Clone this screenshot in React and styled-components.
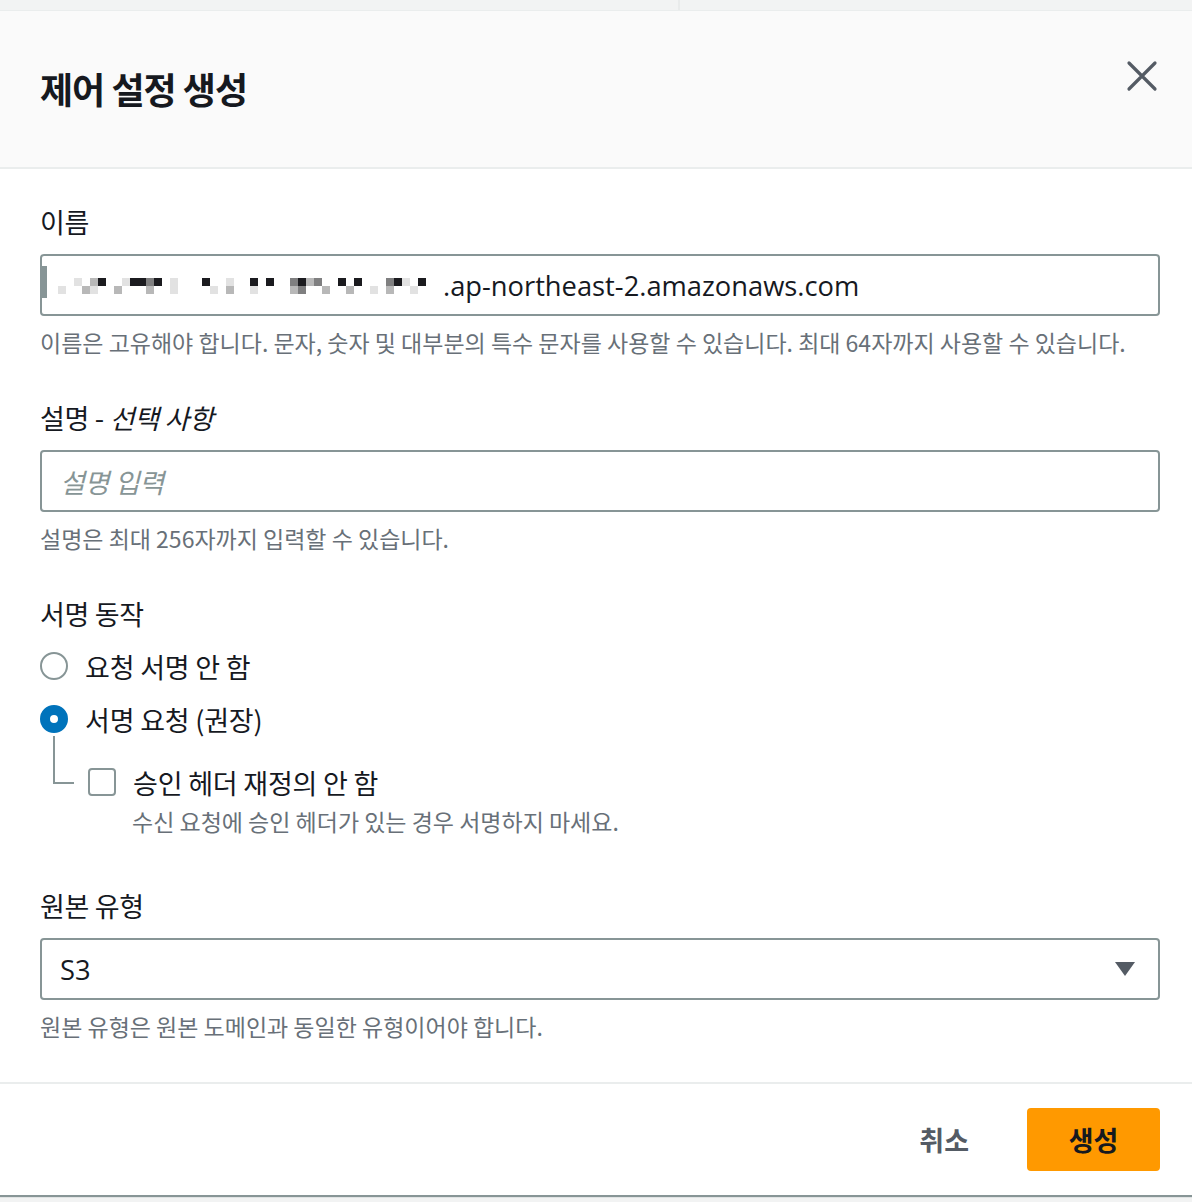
import React from 'react';
import styled, { createGlobalStyle } from 'styled-components';

const GlobalStyle = createGlobalStyle`
  html, body {
    margin: 0;
    padding: 0;
    background: #f2f3f3;
  }
  body {
    font-family: "Open Sans", "Noto Sans CJK KR", sans-serif;
    color: #16191f;
  }
  * { box-sizing: border-box; }
`;

const Page = styled.div`
  width: 1192px;
  min-height: 1202px;
  background: #f2f3f3;
`;

const Backdrop = styled.div`
  height: 10px;
  display: flex;
`;

const BackdropCell = styled.div`
  width: ${p => p.$w || 'auto'};
  flex: ${p => (p.$w ? 'none' : '1')};
  border-right: ${p => (p.$divider ? '2px solid #e9ebeb' : 'none')};
`;

const Modal = styled.div`
  background: #fff;
  box-shadow: 0 2px 1px #879596;
`;

const Header = styled.div`
  height: 159px;
  padding: 53px 29px 0 40px;
  background: #fafafa;
  border-top: 1px solid #eaeded;
  border-bottom: 2px solid #eaeded;
  display: flex;
  justify-content: space-between;
  align-items: flex-start;
`;

const Title = styled.h2`
  margin: 0;
  font-family: "Noto Sans CJK KR", sans-serif;
  font-size: 36px;
  line-height: 48px;
  font-weight: 700;
  color: #16191f;
  letter-spacing: -1px;
`;

const CloseButton = styled.button`
  width: 42px;
  height: 42px;
  margin-top: -9px;
  padding: 0;
  border: none;
  background: transparent;
  display: flex;
  align-items: center;
  justify-content: center;
  cursor: pointer;
`;

const Body = styled.div`
  padding: 33px 32px 40px 40px;
  display: flex;
  flex-direction: column;
  gap: 40px;
`;

const Field = styled.div`
  display: flex;
  flex-direction: column;
`;

const Label = styled.div`
  font-family: "Noto Sans CJK KR", sans-serif;
  font-size: 27px;
  line-height: 40px;
  color: #16191f;
  margin-bottom: 12px;
  letter-spacing: -0.3px;

  i { font-style: italic; }
`;

const InputBox = styled.div`
  height: 62px;
  border: 2px solid #879596;
  border-radius: 4px;
  background: #fff;
  display: flex;
  align-items: center;
  padding: 0 18px;
  font-size: 27.3px;
  color: #16191f;
  position: relative;
`;

const Placeholder = styled.span`
  font-family: "Noto Sans CJK KR", sans-serif;
  font-size: 27px;
  font-style: italic;
  color: #879596;
  letter-spacing: -0.3px;
`;

const Hint = styled.div`
  margin-top: 10px;
  font-family: "Noto Sans CJK KR", sans-serif;
  font-size: 23px;
  line-height: 32px;
  color: #687078;
`;

const Redacted = styled.span`
  display: inline-grid;
  grid-template-columns: repeat(${p => p.$cols}, 8px);
  grid-auto-rows: 8px;
  margin-left: -2px;
  margin-right: 1px;
  margin-top: 2px;
`;

const Pixel = styled.span`
  background: ${p => p.$c};
`;

const CursorBar = styled.span`
  position: absolute;
  left: 0;
  top: 10px;
  width: 5px;
  height: 32px;
  background: #879596;
`;

const RadioGroup = styled.div`
  display: flex;
  flex-direction: column;
  gap: 13px;
  margin-bottom: 9px;
`;

const OptionRow = styled.label`
  display: flex;
  align-items: center;
  gap: 17px;
  height: 40px;
  font-family: "Noto Sans CJK KR", sans-serif;
  font-size: 27px;
  color: #16191f;
  letter-spacing: -0.2px;
  position: relative;
`;

const RadioDot = styled.span`
  width: 28px;
  height: 28px;
  border-radius: 50%;
  flex: none;
  border: ${p => (p.$checked ? '10px solid #0073bb' : '2px solid #879596')};
  background: #fff;
`;

const Nested = styled.div`
  position: relative;
  margin-top: 10px;
  padding-left: 48px;
`;

const TreeLine = styled.span`
  position: absolute;
  left: 13px;
  top: -26px;
  width: 21px;
  height: 48px;
  border-left: 2px solid #879596;
  border-bottom: 2px solid #879596;
`;

const CheckBox = styled.span`
  width: 28px;
  height: 28px;
  flex: none;
  border: 2px solid #879596;
  border-radius: 4px;
  background: #fff;
`;

const SubHint = styled(Hint)`
  margin-top: 3px;
  padding-left: 44px;
`;

const SelectBox = styled(InputBox)`
  justify-content: space-between;
  padding-right: 22px;
`;

const Footer = styled.div`
  height: 113px;
  border-top: 2px solid #eaeded;
  padding: 24px 32px 0 0;
  display: flex;
  justify-content: flex-end;
  align-items: flex-start;
  gap: 58px;
`;

const Button = styled.button`
  height: 63px;
  min-width: ${p => (p.$primary ? '133px' : 'auto')};
  padding: 0 ${p => (p.$primary ? '38px' : '0')};
  border: none;
  border-radius: 4px;
  background: ${p => (p.$primary ? '#ff9900' : 'transparent')};
  color: ${p => (p.$primary ? '#16191f' : '#545b64')};
  font-family: "Noto Sans CJK KR", sans-serif;
  font-size: 27px;
  font-weight: 700;
  cursor: pointer;
`;

// blurred-out part of the domain name, as a mosaic
const redactRows = [
  '..l.gk..lkkmk.l...k..l..k.k..mkgm..k.k...mkl.k..',
  'l..gl..g...g..l....l.g..l....gm..g..g..l.g..l...',
];
const shades = {
  '.': '#ffffff',
  l: '#e2e2e2',
  g: '#b8b8b8',
  m: '#7f7f80',
  k: '#1b1b1f',
};

const XIcon = () => (
  <svg width="32" height="32" viewBox="0 0 32 32">
    <path d="M3 3 L29 29 M29 3 L3 29" stroke="#545b64" strokeWidth="3.2" strokeLinecap="round" fill="none" />
  </svg>
);

const Caret = () => (
  <svg width="22" height="16" viewBox="0 0 22 16">
    <path d="M1 1 H21 L11 15 Z" fill="#545b64" />
  </svg>
);

const App = () => {
  const cols = redactRows[0].length;
  return (
    <Page>
      <GlobalStyle />
      <Backdrop>
        <BackdropCell $w="680px" $divider />
        <BackdropCell />
      </Backdrop>
      <Modal>
        <Header>
          <Title>제어 설정 생성</Title>
          <CloseButton aria-label="닫기">
            <XIcon />
          </CloseButton>
        </Header>

        <Body>
          <Field>
            <Label>이름</Label>
            <InputBox>
              <CursorBar />
              <Redacted $cols={cols}>
                {redactRows.join('').split('').map((ch, i) => (
                  <Pixel key={i} $c={shades[ch]} />
                ))}
              </Redacted>
              .ap-northeast-2.amazonaws.com
            </InputBox>
            <Hint>이름은 고유해야 합니다. 문자, 숫자 및 대부분의 특수 문자를 사용할 수 있습니다. 최대 64자까지 사용할 수 있습니다.</Hint>
          </Field>

          <Field>
            <Label>설명 - <i>선택 사항</i></Label>
            <InputBox>
              <Placeholder>설명 입력</Placeholder>
            </InputBox>
            <Hint>설명은 최대 256자까지 입력할 수 있습니다.</Hint>
          </Field>

          <Field>
            <Label>서명 동작</Label>
            <RadioGroup>
              <OptionRow>
                <RadioDot />
                요청 서명 안 함
              </OptionRow>
              <OptionRow>
                <RadioDot $checked />
                서명 요청 (권장)
              </OptionRow>
              <Nested>
                <TreeLine />
                <OptionRow>
                  <CheckBox />
                  승인 헤더 재정의 안 함
                </OptionRow>
                <SubHint>수신 요청에 승인 헤더가 있는 경우 서명하지 마세요.</SubHint>
              </Nested>
            </RadioGroup>
          </Field>

          <Field>
            <Label>원본 유형</Label>
            <SelectBox>
              <span>S3</span>
              <Caret />
            </SelectBox>
            <Hint>원본 유형은 원본 도메인과 동일한 유형이어야 합니다.</Hint>
          </Field>
        </Body>

        <Footer>
          <Button>취소</Button>
          <Button $primary>생성</Button>
        </Footer>
      </Modal>
    </Page>
  );
};

export default App;
